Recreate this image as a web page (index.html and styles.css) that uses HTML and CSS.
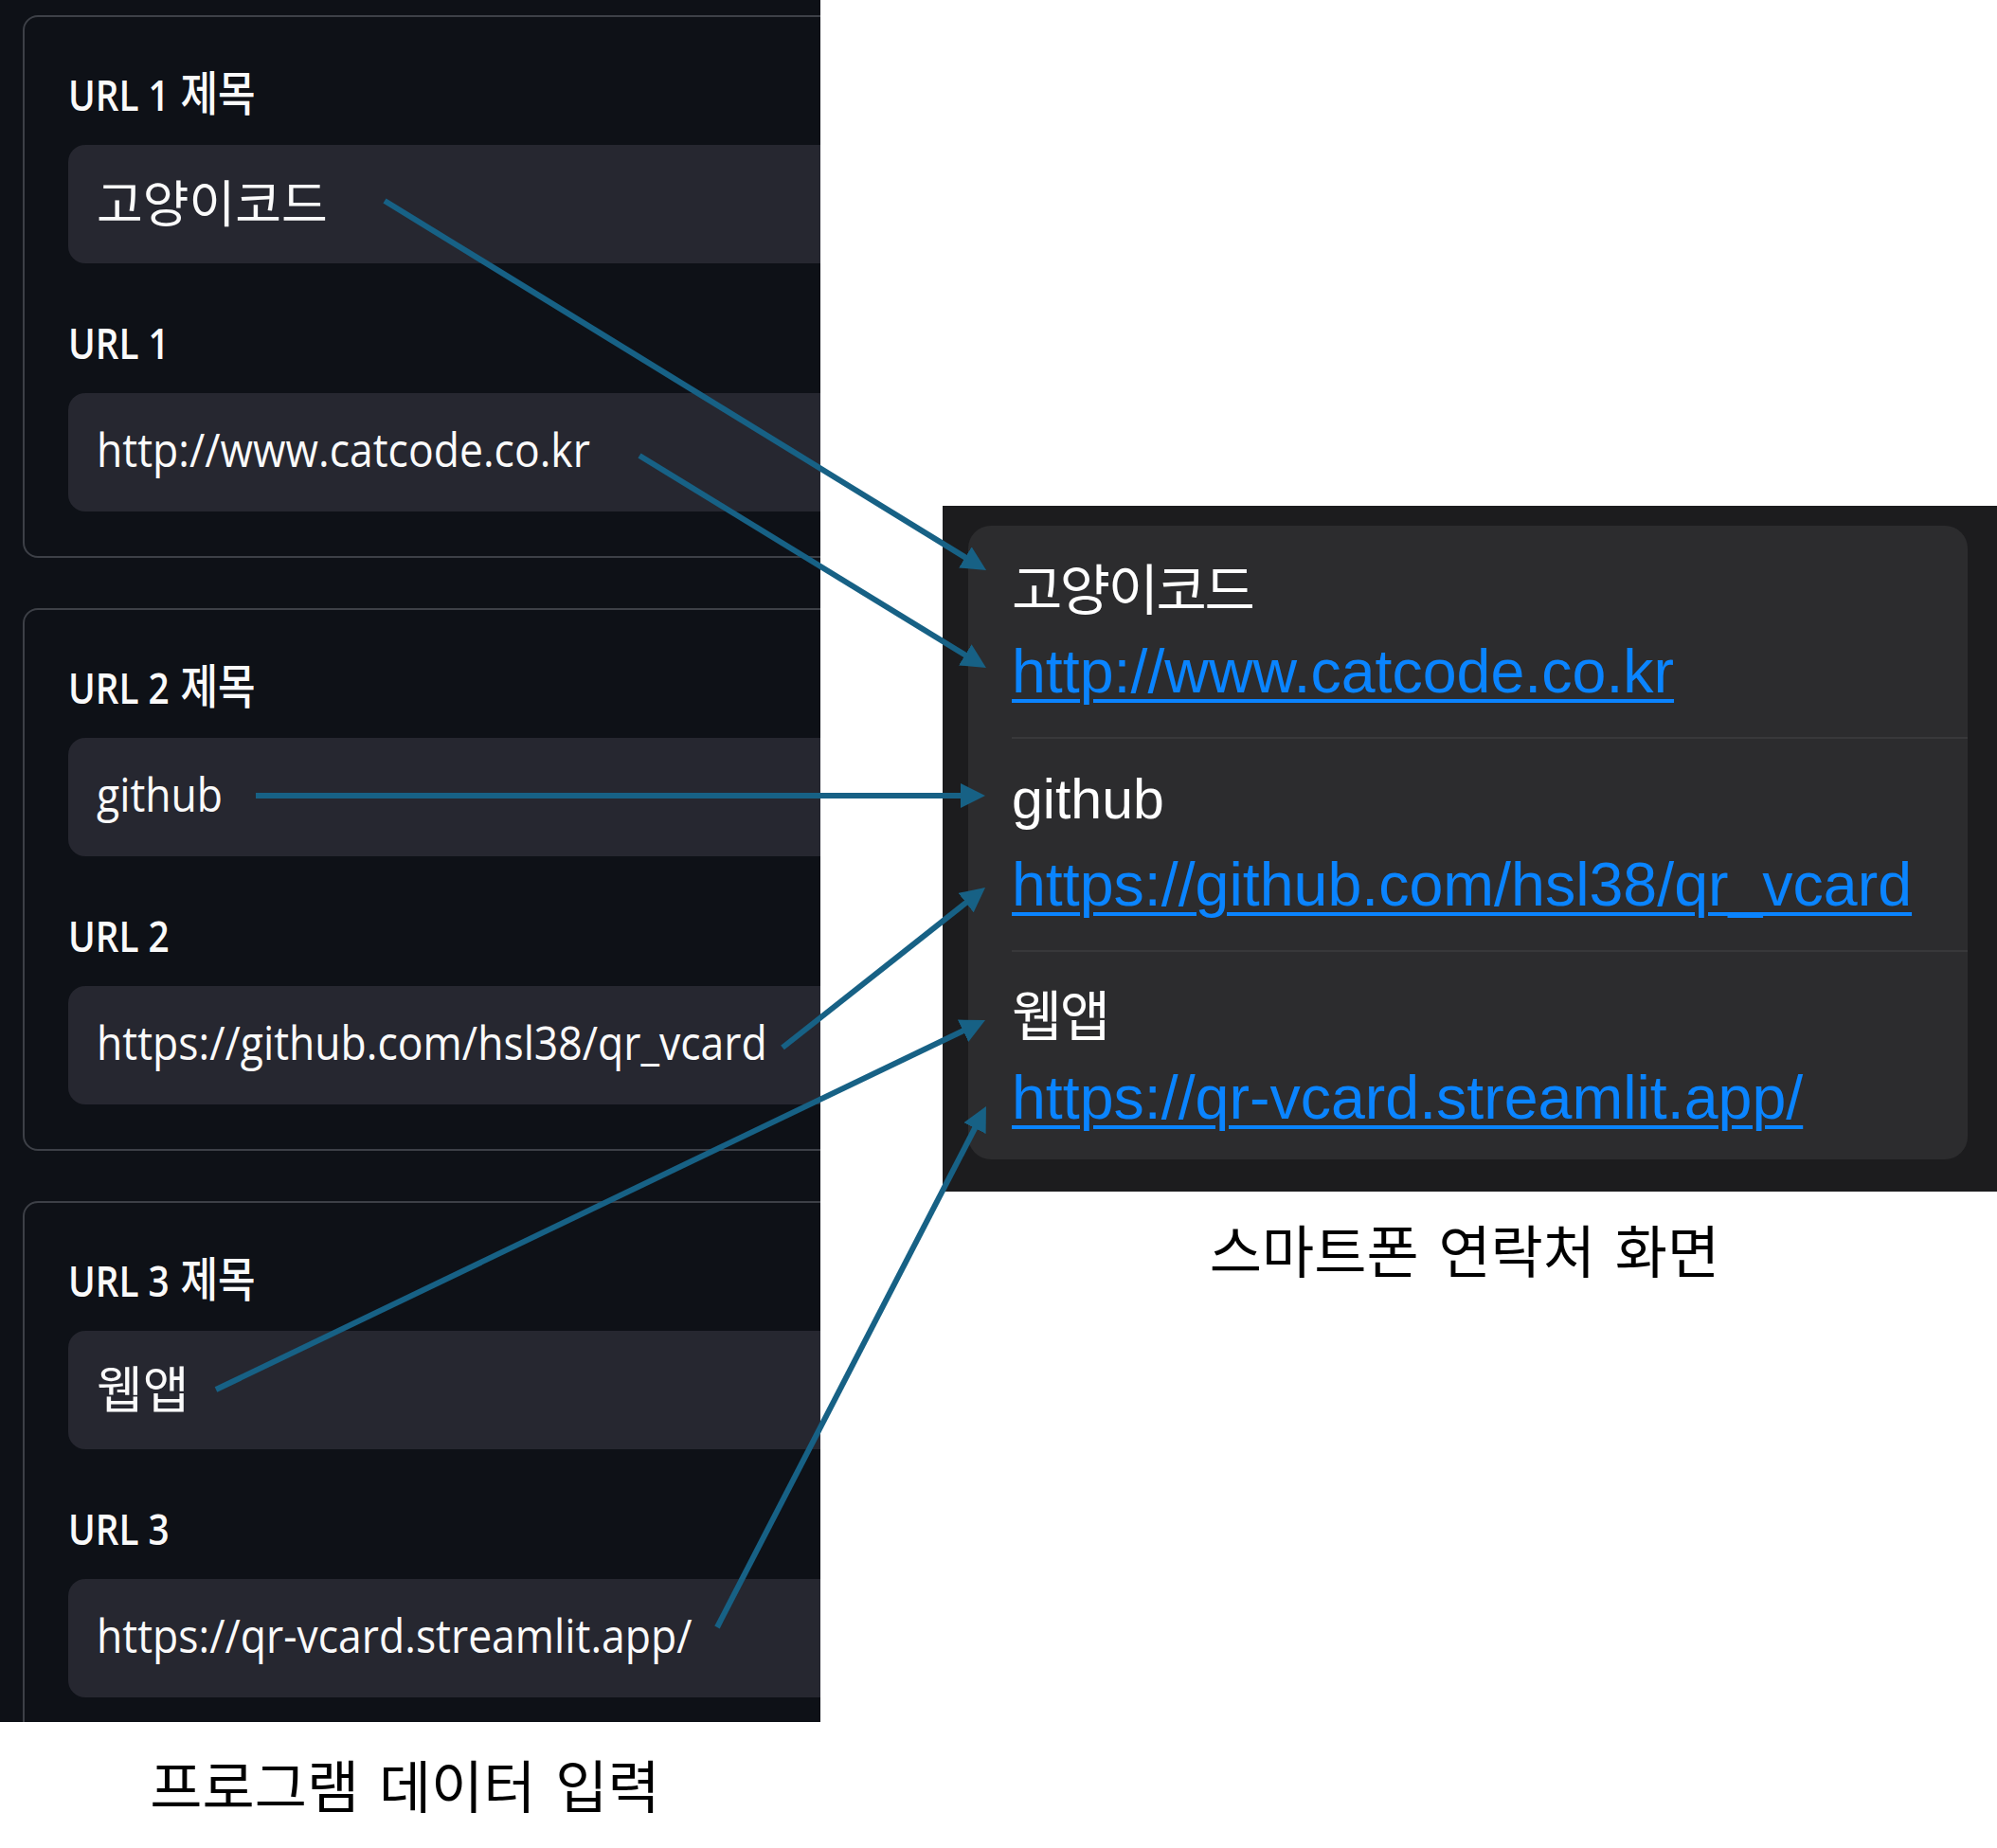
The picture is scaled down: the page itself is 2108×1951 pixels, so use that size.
FILE: index.html
```html
<!DOCTYPE html>
<html lang="ko">
<head>
<meta charset="utf-8">
<title>QR vCard</title>
<link rel="stylesheet" href="styles.css">
</head>
<body>
<div class="page">
  <section class="left">
    <div class="form-panel">
      <div class="card">
        <div class="field">
          <div class="label"><span class="sq">URL 1 <span class="k">제목</span></span></div>
          <div class="input"><span class="ko">고양이코드</span></div>
        </div>
        <div class="field">
          <div class="label"><span class="sq">URL 1</span></div>
          <div class="input"><span class="sq">http://www.catcode.co.kr</span></div>
        </div>
      </div>
      <div class="card">
        <div class="field">
          <div class="label"><span class="sq">URL 2 <span class="k">제목</span></span></div>
          <div class="input"><span class="sq">github</span></div>
        </div>
        <div class="field">
          <div class="label"><span class="sq">URL 2</span></div>
          <div class="input"><span class="sq">https://github.com/hsl38/qr_vcard</span></div>
        </div>
      </div>
      <div class="card">
        <div class="field">
          <div class="label"><span class="sq">URL 3 <span class="k">제목</span></span></div>
          <div class="input"><span class="ko">웹앱</span></div>
        </div>
        <div class="field">
          <div class="label"><span class="sq">URL 3</span></div>
          <div class="input"><span class="sq">https://qr-vcard.streamlit.app/</span></div>
        </div>
      </div>
    </div>
    <div class="caption caption-left">프로그램 데이터 입력</div>
  </section>

  <section class="right">
    <div class="phone">
      <div class="contact-card">
        <div class="row">
          <div class="title ko">고양이코드</div>
          <div class="link"><a href="#">http://www.catcode.co.kr</a></div>
        </div>
        <div class="row">
          <div class="title">github</div>
          <div class="link"><a href="#">https://github.com/hsl38/qr_vcard</a></div>
        </div>
        <div class="row">
          <div class="title ko">웹앱</div>
          <div class="link"><a href="#">https://qr-vcard.streamlit.app/</a></div>
        </div>
      </div>
    </div>
    <div class="caption caption-right">스마트폰 연락처 화면</div>
  </section>

  <svg class="arrows" width="2108" height="1951" viewBox="0 0 2108 1951" aria-hidden="true">
    <defs>
      <marker id="ah" markerUnits="userSpaceOnUse" markerWidth="26" markerHeight="26" viewBox="0 0 26 26" refX="8" refY="13" orient="auto">
        <path d="M0,0 L26,13 L0,26 Z" fill="#176185"/>
      </marker>
    </defs>
    <g stroke="#176185" stroke-width="6" fill="none" marker-end="url(#ah)">
      <line x1="406" y1="212" x2="1025.7" y2="592.6"/>
      <line x1="675" y1="481" x2="1025.6" y2="695.6"/>
      <line x1="270" y1="840" x2="1022" y2="840"/>
      <line x1="826" y1="1106" x2="1025.9" y2="948.2"/>
      <line x1="228" y1="1467" x2="1023.8" y2="1084.8"/>
      <line x1="757" y1="1718" x2="1032.7" y2="1184"/>
    </g>
  </svg>
</div>
</body>
</html>
```

FILE: styles.css
```css
* {
  box-sizing: border-box;
}

html,
body {
  margin: 0;
  padding: 0;
  background: #ffffff;
}

body {
  width: 2108px;
  height: 1951px;
  overflow: hidden;
}

.page {
  position: relative;
  display: flex;
  width: 2108px;
  height: 1951px;
}

/* ---------- left: streamlit form ---------- */
.left {
  width: 866px;
  flex: none;
  display: flex;
  flex-direction: column;
}

.form-panel {
  height: 1818px;
  background: #0e1117;
  overflow: hidden;
  padding: 16px 0 0 24px;
  display: flex;
  flex-direction: column;
  gap: 53px;
}

.card {
  width: 1100px;
  flex: none;
  border: 2px solid #3d4047;
  border-radius: 16px;
  padding: 52px 0 47px 46px;
  display: flex;
  flex-direction: column;
  gap: 54px;
}

.label {
  height: 60px;
  margin-bottom: 23px;
  font: 600 45px/60px "Open Sans", "Noto Sans CJK KR", sans-serif;
  color: #fafafa;
  white-space: nowrap;
}

.label .sq {
  transform: scaleX(0.86);
}

.label .k {
  font-family: "Noto Sans CJK KR", sans-serif;
  font-weight: 500;
  font-size: 50px;
  line-height: 0;
  margin-left: 2px;
}

.input {
  height: 125px;
  background: #262730;
  border-radius: 18px;
  padding: 0 0 6px 30px;
  font: 500 50px/119px "Open Sans", "Noto Sans CJK KR", sans-serif;
  color: #fafafa;
  white-space: nowrap;
}

.sq {
  display: inline-block;
  transform: scaleX(0.89);
  transform-origin: 0 50%;
  white-space: nowrap;
}

.input .ko {
  font-family: "Noto Sans CJK KR", sans-serif;
  font-weight: 400;
  font-size: 53px;
}

/* ---------- captions ---------- */
.caption {
  font: 400 60px/80px "Noto Sans CJK KR", sans-serif;
  color: #000000;
  word-spacing: 4px;
  text-align: center;
  padding-right: 11px;
  white-space: nowrap;
}

.caption-left {
  margin-top: 25px;
}

.caption-right {
  margin-top: 20px;
}

/* ---------- right: phone contact ---------- */
.right {
  width: 1113px;
  flex: none;
  margin-left: 129px;
  padding-top: 534px;
  display: flex;
  flex-direction: column;
}

.phone {
  height: 724px;
  background: #1c1c1e;
  padding: 21px 31px 0 27px;
}

.contact-card {
  height: 669px;
  background: #2c2c2e;
  border-radius: 24px;
  overflow: hidden;
}

.row {
  margin-left: 46px;
  padding: 16px 0 29px;
  border-bottom: 2px solid #38383a;
}

.row:last-child {
  border-bottom: none;
}

.title {
  font: 400 59px/96px "Liberation Sans", "Noto Sans CJK KR", sans-serif;
  color: #ffffff;
  white-space: nowrap;
}

.title.ko {
  font-family: "Noto Sans CJK KR", sans-serif;
  font-size: 58px;
  letter-spacing: -2.5px;
}

.link {
  padding-top: 2px;
  font: 400 64.5px/80px "Liberation Sans", sans-serif;
  white-space: nowrap;
}

.link a {
  color: #0a84ff;
  text-decoration: underline;
  text-decoration-thickness: 4px;
  text-underline-offset: 7px;
}

/* ---------- connector arrows overlay ---------- */
.arrows {
  position: absolute;
  left: 0;
  top: 0;
  pointer-events: none;
}
```
